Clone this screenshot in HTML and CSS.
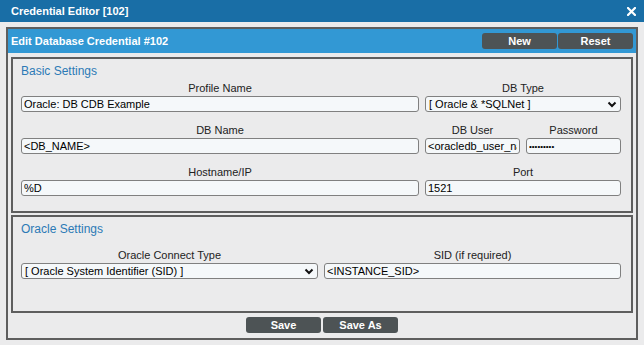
FILE: index.html
```html
<!DOCTYPE html>
<html>
<head>
  <title>Credential Editor</title>
  <link rel="stylesheet" href="styles.css">
</head>
<body>
  <div class="titlebar">
    <span class="titlebar-text">Credential Editor [102]</span>
    <svg class="close-icon" width="9" height="9" viewBox="0 0 9 9">
      <path d="M1 1 L8 8 M8 1 L1 8" stroke="#fff" stroke-width="2.2" stroke-linecap="square"/>
    </svg>
  </div>

  <div class="frame">
    <div class="frame-head">
      <span class="frame-title">Edit Database Credential #102</span>
      <div class="head-buttons">
        <button type="button" class="btn">New</button>
        <button type="button" class="btn">Reset</button>
      </div>
    </div>

    <div class="panel basic">
      <div class="panel-title">Basic Settings</div>
      <div class="fields">
        <div class="field span4">
          <label for="profile">Profile Name</label>
          <input type="text" id="profile" value="Oracle: DB CDB Example">
        </div>
        <div class="field span2">
          <label for="dbtype">DB Type</label>
          <div class="select-wrap">
            <select id="dbtype"><option>[ Oracle &amp; *SQLNet ]</option></select>
            <svg class="chevron" width="10" height="7" viewBox="0 0 10 7">
              <path d="M1.5 1.5 L5 5 L8.5 1.5" fill="none" stroke="#111" stroke-width="2"/>
            </svg>
          </div>
        </div>

        <div class="field span4">
          <label for="dbname">DB Name</label>
          <input type="text" id="dbname" value="<DB_NAME>">
        </div>
        <div class="field span1">
          <label for="dbuser">DB User</label>
          <input type="text" id="dbuser" value="<oracledb_user_name>">
        </div>
        <div class="field span1">
          <label for="password">Password</label>
          <input type="password" id="password" class="pass" value="secretpwd">
        </div>

        <div class="field span4">
          <label for="host">Hostname/IP</label>
          <input type="text" id="host" value="%D">
        </div>
        <div class="field span2">
          <label for="port">Port</label>
          <input type="text" id="port" value="1521">
        </div>
      </div>
    </div>

    <div class="panel oracle">
      <div class="panel-title">Oracle Settings</div>
      <div class="fields">
        <div class="field span3">
          <label for="connect">Oracle Connect Type</label>
          <div class="select-wrap">
            <select id="connect"><option>[ Oracle System Identifier (SID) ]</option></select>
            <svg class="chevron" width="10" height="7" viewBox="0 0 10 7">
              <path d="M1.5 1.5 L5 5 L8.5 1.5" fill="none" stroke="#111" stroke-width="2"/>
            </svg>
          </div>
        </div>
        <div class="field span3">
          <label for="sid">SID (if required)</label>
          <input type="text" id="sid" value="<INSTANCE_SID>">
        </div>
      </div>
    </div>

    <div class="actions">
      <button type="button" class="btn">Save</button>
      <button type="button" class="btn">Save As</button>
    </div>
  </div>
</body>
</html>
```

FILE: styles.css
```css
/* Credential editor */

body {
  margin: 0;
  padding: 0;
  background-color: #ebebec;
  font-family: "Liberation Sans", Arial, sans-serif;
  font-size: 11px;
  color: #222;
}

.titlebar {
  height: 22px;
  background-color: #196ea6;
  display: flex;
  align-items: center;
  justify-content: space-between;
  padding: 0 8px 0 11px;
}

.titlebar-text {
  color: #fff;
  font-weight: bold;
  font-size: 11px;
}

.close-icon {
  display: block;
}

.frame {
  margin: 5px 6px 0 6px;
  border: 2px solid #5e5e5e;
}

.frame-head {
  height: 24px;
  box-sizing: border-box;
  background-color: #3298d4;
  padding: 4px 3px;
  display: flex;
  align-items: center;
  justify-content: space-between;
}

.frame-title {
  color: #fff;
  font-weight: bold;
  font-size: 11px;
}

.head-buttons {
  display: flex;
  gap: 1px;
}

.btn {
  width: 75px;
  height: 16px;
  padding: 0;
  border: none;
  border-radius: 3px;
  background-color: #4d5355;
  color: #fff;
  font-family: "Liberation Sans", Arial, sans-serif;
  font-size: 11px;
  font-weight: bold;
  cursor: pointer;
}

.panel {
  margin: 4px 3px 0 3px;
  border: 2px solid #5e5e5e;
  padding: 5px 10px 15px 8px;
}

.panel.oracle {
  margin-top: 2px;
  padding-bottom: 32px;
}

.panel-title {
  color: #2c7ab6;
  font-size: 12px;
  line-height: 14px;
}

.fields {
  margin-top: 3px;
  display: grid;
  grid-template-columns: repeat(6, 1fr);
  column-gap: 6px;
  row-gap: 11px;
}

.oracle .fields {
  margin-top: 12px;
}

.field {
  display: flex;
  flex-direction: column;
  min-width: 0;
}

.span1 { grid-column: span 1; }
.span2 { grid-column: span 2; }
.span3 { grid-column: span 3; }
.span4 { grid-column: span 4; }

.field label {
  text-align: center;
  line-height: 15px;
  color: #222;
}

.field input,
.field select {
  width: 100%;
  height: 16px;
  box-sizing: border-box;
  margin: 0;
  padding: 0 2px;
  border: 1px solid #808080;
  border-radius: 3px;
  background-color: #f5f8fa;
  font-family: "Liberation Sans", Arial, sans-serif;
  font-size: 11px;
  color: #000;
  outline: none;
}

.field input.pass {
  font-size: 8px;
  letter-spacing: 0;
}

.select-wrap {
  position: relative;
}

.field select {
  appearance: none;
  -webkit-appearance: none;
  padding-left: 3px;
}

.chevron {
  position: absolute;
  right: 4px;
  top: 5px;
  pointer-events: none;
}

.actions {
  display: flex;
  justify-content: center;
  gap: 2px;
  padding: 4px 0 5px 0;
}
```
